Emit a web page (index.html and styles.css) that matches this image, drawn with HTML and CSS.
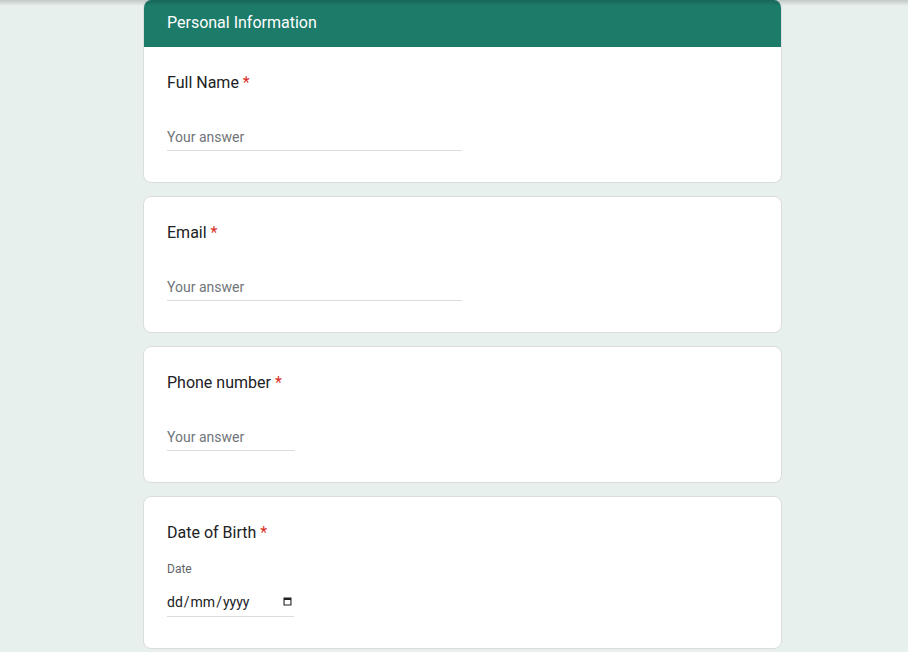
FILE: index.html
```html
<!DOCTYPE html>
<html lang="en-GB">
<head>
<meta charset="utf-8">
<title>Personal Information</title>
<link rel="stylesheet" href="styles.css">
</head>
<body>
<div class="top-shadow"></div>
<main class="page">
  <form class="form">
    <section class="card card-first">
      <div class="card-header">Personal Information</div>
      <div class="card-body">
        <label class="question" for="fullname">Full Name <span class="req">*</span></label>
        <input class="answer" id="fullname" type="text" placeholder="Your answer">
      </div>
    </section>
    <section class="card">
      <div class="card-body">
        <label class="question" for="email">Email <span class="req">*</span></label>
        <input class="answer" id="email" type="email" placeholder="Your answer">
      </div>
    </section>
    <section class="card">
      <div class="card-body">
        <label class="question" for="phone">Phone number <span class="req">*</span></label>
        <input class="answer answer-short" id="phone" type="tel" placeholder="Your answer">
      </div>
    </section>
    <section class="card">
      <div class="card-body">
        <label class="question" for="dob">Date of Birth <span class="req">*</span></label>
        <div class="sub-label">Date</div>
        <div class="date-field">
          <span class="date-text">dd<span class="sep">/</span>mm<span class="sep">/</span>yyyy</span>
          <svg class="cal-icon" width="9" height="9" viewBox="0 0 9 9"><path d="M0.5 0.5h8v8h-8z M1.6 3v4.4h5.8V3z" fill="#202124" fill-rule="evenodd"/></svg>
        </div>
      </div>
    </section>
  </form>
</main>
</body>
</html>
```
FILE: styles.css
```css
html, body {
  margin: 0;
  padding: 0;
}
body {
  background: #e8f0ee;
  font-family: Roboto, "Liberation Sans", Arial, sans-serif;
  color: #202124;
}
.top-shadow {
  position: fixed;
  top: 0;
  left: 0;
  right: 0;
  height: 6px;
  background: linear-gradient(rgba(0,0,0,0.16), rgba(0,0,0,0));
  pointer-events: none;
  z-index: 5;
}
.page {
  padding-left: 17px;
}
.form {
  width: 639px;
  margin: 0 auto;
  display: flex;
  flex-direction: column;
  gap: 13px;
}
.card {
  background: #fff;
  border: 1px solid #dadce0;
  border-radius: 8px;
  overflow: hidden;
}
.card-first {
  border-top: none;
}
.card-header {
  background: #1d7b6a;
  color: #fff;
  font-size: 16px;
  height: 47px;
  line-height: 46px;
  padding: 0 23px;
  box-sizing: border-box;
}
.card-body {
  padding: 24px 23px 31px;
  display: flex;
  flex-direction: column;
  align-items: flex-start;
}
.question {
  font-size: 16px;
  line-height: 24px;
  color: #202124;
}
.req {
  color: #d93025;
}
.answer {
  margin-top: 24px;
  width: 295px;
  height: 32px;
  box-sizing: border-box;
  border: none;
  border-bottom: 1px solid #dadce0;
  padding: 4px 0 0;
  font-family: inherit;
  font-size: 14px;
  color: #202124;
  outline: none;
  background: transparent;
}
.answer::placeholder {
  color: #70757a;
}
.answer-short {
  width: 128px;
}
.sub-label {
  margin-top: 16px;
  font-size: 12px;
  line-height: 16px;
  color: #5f6368;
}
.date-field {
  margin-top: 9px;
  width: 127px;
  height: 31px;
  box-sizing: border-box;
  border-bottom: 1px solid #dadce0;
  display: flex;
  align-items: center;
  justify-content: space-between;
  padding: 1px 2px 0 0;
}
.date-text {
  font-size: 14px;
  color: #202124;
}
.sep {
  margin: 0 1px;
}
.cal-icon {
  display: block;
}
```
